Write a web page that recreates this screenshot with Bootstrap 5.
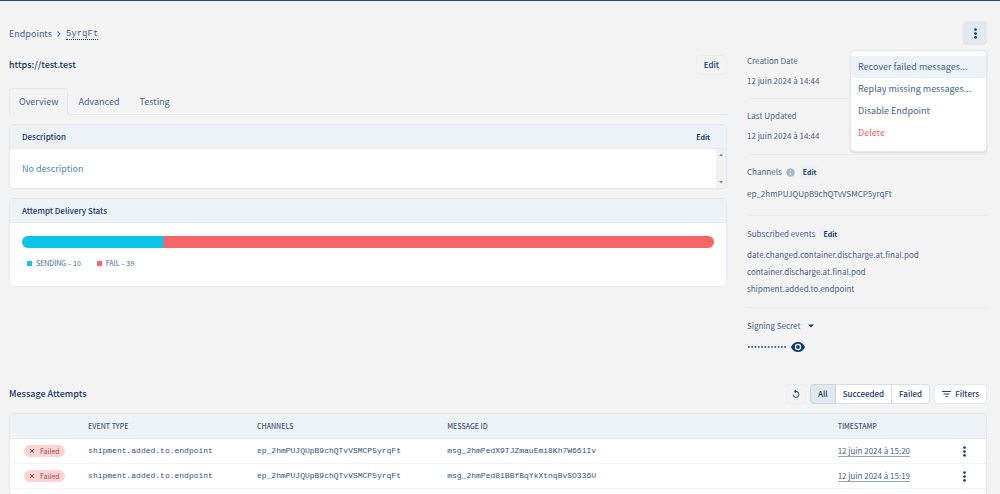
<!DOCTYPE html>
<html lang="en">
<head>
<meta charset="utf-8">
<meta name="viewport" content="width=device-width, initial-scale=1">
<title>Endpoint 5yrqFt</title>
<link href="https://cdn.jsdelivr.net/npm/bootstrap@5.3.0/dist/css/bootstrap.min.css" rel="stylesheet">
<style>
:root{--ink:#163a66;--soft:#47648a;--line:#e2e8f0;--head:#edf2f7}
body{font-family:"Noto Sans CJK SC","Noto Sans",sans-serif;font-size:8px;line-height:12px;color:var(--soft);background:#f3f3f3}
.page{border-top:1px solid #1f4a79;padding:20px 13px 0 9px}
.mono{font-family:"Liberation Mono",monospace;font-size:8px}
.crumbs{font-size:9px;line-height:24px;padding-top:1px}
.crumbs a{color:var(--soft);text-decoration:none}
.crumbs .mono{font-size:9px;line-height:10px;border-bottom:1px dotted var(--ink)}
.btn{--bs-btn-font-size:8px;--bs-btn-line-height:12px;--bs-btn-padding-y:3px;--bs-btn-padding-x:7px;--bs-btn-border-radius:4px;--bs-btn-color:var(--ink);--bs-btn-font-weight:500;--bs-btn-border-color:var(--line);--bs-btn-hover-color:var(--ink);--bs-btn-active-color:var(--ink);--bs-btn-active-bg:#e2e8f0;--bs-btn-active-border-color:#cbd5e0}
.btn svg,.kebab svg{display:block}
.btn-plain{--bs-btn-border-color:#ebedf2}
.btn-menu{--bs-btn-padding-x:0;--bs-btn-padding-y:0;width:24px;height:24px;background:#e2e8f0}
.btn-icon{--bs-btn-padding-x:4px;--bs-btn-padding-y:4px}
.btn-mini{--bs-btn-font-size:7px;--bs-btn-padding-y:0;--bs-btn-padding-x:4px;--bs-btn-font-weight:700;border:0;background:var(--head);line-height:12px}
.btn-white{background:#fff;--bs-btn-padding-x:7px}
.btn-group .btn{--bs-btn-border-color:#d5deea}
.menu{font-size:9px;line-height:14px;min-width:137px;padding:5px 0 7px;border:1px solid var(--line);border-radius:4px;box-shadow:0 1px 2px #0000001a;top:29px;right:0}
.menu .dropdown-item{padding:4px 7px;color:var(--soft);line-height:14px}
.menu .dropdown-item.current{background:var(--head)}
.menu .dropdown-item.danger{color:#e56a66}
.main-col{min-width:0;margin-right:20px}
.side-col{width:240px}
.title-row{margin-top:9px}
.site{font-size:9px;font-weight:500;color:var(--ink);line-height:20px}
.nav-tabs{--bs-nav-tabs-border-color:var(--line);--bs-nav-tabs-border-radius:4px;--bs-nav-tabs-link-active-bg:#f3f3f3;--bs-nav-tabs-link-active-color:var(--soft);--bs-nav-tabs-link-active-border-color:var(--line) var(--line) #f3f3f3;--bs-nav-link-color:var(--soft);--bs-nav-link-padding-x:9px;--bs-nav-link-padding-y:5px;margin-top:13px}
.nav-tabs .nav-link{font-size:9px;line-height:15px}
.panel{border:1px solid var(--line);border-radius:5px;background:#fff;overflow:hidden}
.main-col .panel{margin-top:9px}
.panel-head{background:var(--head);border-bottom:1px solid var(--line);color:var(--ink);font-weight:500;line-height:12px;padding:6px 12px 5px}
.panel-head h2,.attempts h2{font-size:8px;line-height:12px;font-weight:500;margin:0}
.desc{height:39px}
.desc p{font-size:9px;color:#4a8ac0;line-height:39px;margin:0;padding-left:12px}
.scroller{width:10px;background:#f1f1f1;padding:3px 2px}
.stats{padding:13px 12px 17px}
.progress{--bs-progress-height:12px;--bs-progress-border-radius:6px}
.legend{font-size:7px;line-height:12px;margin:9px 0 0;padding-left:5px}
.legend i{width:5px;height:5px;display:block}
.bg-sending{background:#0dc5eb}
.bg-fail{background:#f66565}
.facts{margin:8px 0 0}
.facts>div{border-bottom:1px solid #ebecee;padding:10px 0 11px}
.facts>div:first-child{padding-top:0;padding-bottom:10px}
.facts>div:last-child{border:0}
.facts dt{font-weight:400;line-height:14px}
.facts dd{margin:6px 0 0;line-height:14px}
.facts .tall{padding-bottom:14px}
.facts .tall dd{margin-top:8px}
.facts .secret{padding-top:11px}
.facts .secret dd{margin-top:9px}
.facts .events{padding-top:11px}
.facts .events dd{margin-top:7px}
.facts .events dd+dd{margin-top:3px}
.attempts{margin-top:21px}
.attempts h2{font-size:9px;color:var(--ink)}
.bar{margin-bottom:9px}
.grid-panel{border-bottom:0;border-radius:5px 5px 0 0}
.log{--bs-table-bg:transparent;table-layout:fixed;margin:0;color:var(--soft)}
.log>thead th{background:var(--head);font-size:7px;font-weight:500;line-height:12px;padding:6px 0;border-color:var(--line);color:#4a5578}
.log>tbody td{height:25px;padding:0;vertical-align:middle;border-color:#f1f4f8;line-height:12px}
.log .mono{color:#2d5480}
.tag{display:inline-flex;align-items:center;gap:5px;background:#fed3d3;color:#9b4a4a;border-radius:7px;font-size:7px;line-height:12px;padding:0 5px;margin-left:14px}
.stamp{border-bottom:1px solid #8fa6c8;line-height:10px;display:inline-block}
.kebab{border:0;background:none;padding:4px 6px}
</style>
</head>
<body>
<svg class="d-none">
<symbol id="dots" viewBox="0 0 12 12"><g fill="#1d4370"><circle cx="6" cy="1.700" r="1.500"/><circle cx="6" cy="6" r="1.500"/><circle cx="6" cy="10.300" r="1.500"/></g></symbol>
</svg>
<div class="page d-flex flex-column min-vh-100">
<header class="d-flex justify-content-between align-items-start position-relative">
  <nav class="crumbs d-flex align-items-center gap-1" aria-label="Breadcrumb">
    <a href="#">Endpoints</a>
    <svg width="6" height="8" viewBox="0 0 6 8"><path d="M1.500 1.500 4 4 1.500 6.500" fill="none" stroke="#3f8fd0" stroke-width="1.200"/></svg>
    <span class="mono">5yrqFt</span>
  </nav>
  <button class="btn btn-menu" aria-label="Endpoint actions" aria-expanded="true"><svg class="mx-auto" width="11" height="11"><use href="#dots"/></svg></button>
  <ul class="dropdown-menu menu show">
    <li><a class="dropdown-item current" href="#">Recover failed messages...</a></li>
    <li><a class="dropdown-item" href="#">Replay missing messages...</a></li>
    <li><a class="dropdown-item" href="#">Disable Endpoint</a></li>
    <li><a class="dropdown-item danger" href="#">Delete</a></li>
  </ul>
</header>

<div class="d-flex">
  <main class="main-col flex-grow-1">
    <div class="title-row d-flex justify-content-between align-items-center">
      <h1 class="site m-0">https://test.test</h1>
      <button class="btn btn-plain">Edit</button>
    </div>
    <ul class="nav nav-tabs">
      <li class="nav-item"><a class="nav-link active" href="#">Overview</a></li>
      <li class="nav-item"><a class="nav-link" href="#">Advanced</a></li>
      <li class="nav-item"><a class="nav-link" href="#">Testing</a></li>
    </ul>
    <section class="panel">
      <div class="panel-head d-flex justify-content-between align-items-center"><h2>Description</h2><button class="btn btn-mini">Edit</button></div>
      <div class="desc d-flex justify-content-between">
        <p>No description</p>
        <div class="scroller d-flex flex-column justify-content-between" aria-hidden="true">
          <svg width="6" height="5"><path d="M1 4h4L3 1.500z" fill="#8a8a8a"/></svg>
          <svg width="6" height="5"><path d="M1 1h4L3 3.500z" fill="#8a8a8a"/></svg>
        </div>
      </div>
    </section>
    <section class="panel">
      <div class="panel-head"><h2>Attempt Delivery Stats</h2></div>
      <div class="stats">
        <div class="progress"><div class="progress-bar bg-sending" style="width:20.4%"></div><div class="progress-bar bg-fail" style="width:79.6%"></div></div>
        <ul class="legend list-unstyled d-flex gap-3">
          <li class="d-flex align-items-center gap-1"><i class="bg-sending"></i>SENDING – 10</li>
          <li class="d-flex align-items-center gap-1"><i class="bg-fail"></i>FAIL – 39</li>
        </ul>
      </div>
    </section>
  </main>
  <aside class="side-col flex-shrink-0">
    <dl class="facts">
      <div><dt>Creation Date</dt><dd>12 juin 2024 à 14:44</dd></div>
      <div><dt>Last Updated</dt><dd>12 juin 2024 à 14:44</dd></div>
      <div class="tall"><dt class="d-flex align-items-center gap-1">Channels <svg width="9" height="9" viewBox="0 0 9 9"><circle cx="4.500" cy="4.500" r="4.300" fill="#a3b8c8"/><path d="M4.500 4v3M4.500 2v1" stroke="#fff"/></svg><button class="btn btn-mini">Edit</button></dt><dd>ep_2hmPUJQUpB9chQTvVSMCP5yrqFt</dd></div>
      <div class="events"><dt class="d-flex align-items-center gap-1">Subscribed events <button class="btn btn-mini">Edit</button></dt><dd>date.changed.container.discharge.at.final.pod</dd><dd>container.discharge.at.final.pod</dd><dd>shipment.added.to.endpoint</dd></div>
      <div class="secret"><dt class="d-flex align-items-center gap-2">Signing Secret <svg width="6" height="4"><path d="M0 .5h6L3 3.500z" fill="#123e6e"/></svg></dt>
        <dd class="d-flex align-items-center gap-1"><svg width="40" height="4" role="img" aria-label="Hidden secret"><path d="M1 2h38" stroke="#1d4370" stroke-width="1.700" stroke-dasharray="1.700 1.600"/></svg>
        <svg width="14" height="10" viewBox="0 0 14 10"><path d="M7 0C3.800 0 1.100 2 0 5c1.100 3 3.800 5 7 5s5.900-2 7-5C12.900 2 10.200 0 7 0z" fill="#123e6e"/><circle cx="7" cy="5" r="3.200" fill="#f3f3f3"/><circle cx="7" cy="5" r="1.900" fill="#123e6e"/></svg></dd></div>
    </dl>
  </aside>
</div>

<section class="attempts d-flex flex-column flex-grow-1">
  <div class="bar d-flex align-items-center gap-1">
    <h2 class="me-auto">Message Attempts</h2>
    <button class="btn btn-plain btn-icon" aria-label="Refresh"><svg width="10" height="10" viewBox="0 0 24 24"><path d="M12 5V1L7 6l5 5V7c3.300 0 6 2.700 6 6s-2.700 6-6 6-6-2.700-6-6H4c0 4.400 3.600 8 8 8s8-3.600 8-8-3.600-8-8-8z" fill="#1d4370"/></svg></button>
    <div class="btn-group" role="group" aria-label="Status">
      <button class="btn btn-white active">All</button><button class="btn btn-white">Succeeded</button><button class="btn btn-white">Failed</button>
    </div>
    <button class="btn btn-white d-flex align-items-center gap-1"><svg width="9" height="6" viewBox="0 0 9 6"><path d="M0 .5h9M1.500 3h6M3.500 5.500h2" stroke="#1d4370"/></svg>Filters</button>
  </div>
  <div class="panel grid-panel flex-grow-1">
    <table class="table log">
      <colgroup><col style="width:8%"><col style="width:17.3%"><col style="width:19.5%"><col style="width:40%"><col style="width:11.8%"><col></colgroup>
      <thead><tr><th></th><th>EVENT TYPE</th><th>CHANNELS</th><th>MESSAGE ID</th><th>TIMESTAMP</th><th></th></tr></thead>
      <tbody>
        <tr><td><span class="tag"><svg width="6" height="6"><path d="m1 1 4 4M5 1 1 5" stroke="#8f4040"/></svg>Failed</span></td><td class="mono">shipment.added.to.endpoint</td><td class="mono">ep_2hmPUJQUpB9chQTvVSMCP5yrqFt</td><td class="mono">msg_2hmPedX9TJZmauEmi8Kh7W661Iv</td><td><span class="stamp">12 juin 2024 à 15:20</span></td><td><button class="kebab" aria-label="Attempt actions"><svg width="11" height="11"><use href="#dots"/></svg></button></td></tr>
        <tr><td><span class="tag"><svg width="6" height="6"><path d="m1 1 4 4M5 1 1 5" stroke="#8f4040"/></svg>Failed</span></td><td class="mono">shipment.added.to.endpoint</td><td class="mono">ep_2hmPUJQUpB9chQTvVSMCP5yrqFt</td><td class="mono">msg_2hmPed81BBfBqYkXtnqBvSO336U</td><td><span class="stamp">12 juin 2024 à 15:19</span></td><td><button class="kebab" aria-label="Attempt actions"><svg width="11" height="11"><use href="#dots"/></svg></button></td></tr>
      </tbody>
    </table>
  </div>
</section>
</div>
<script src="https://cdn.jsdelivr.net/npm/bootstrap@5.3.0/dist/js/bootstrap.bundle.min.js"></script>
</body>
</html>
